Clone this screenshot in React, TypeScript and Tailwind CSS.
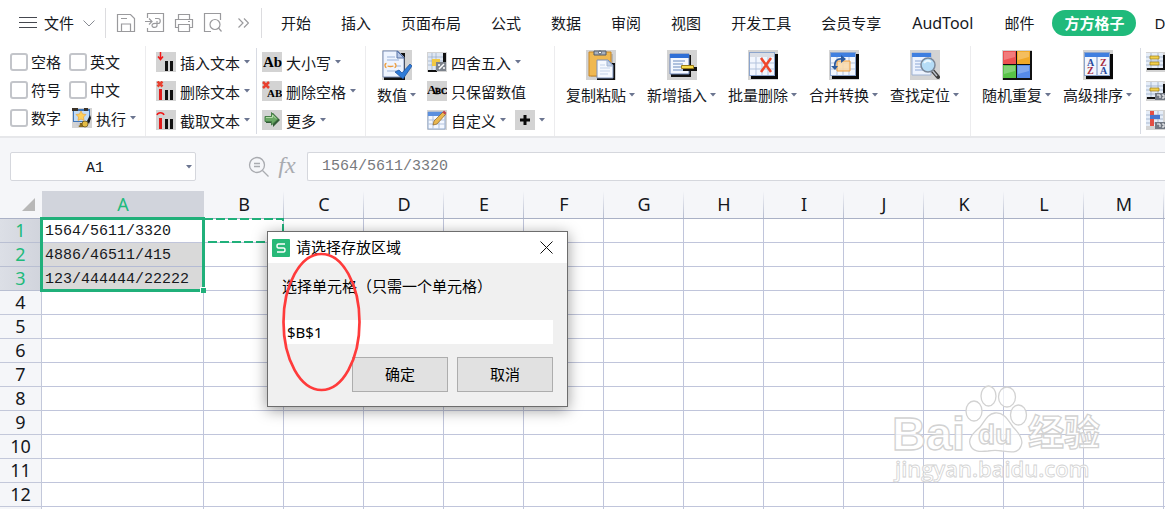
import type { ReactNode } from "react";

const TABS = ["开始", "插入", "页面布局", "公式", "数据", "审阅", "视图", "开发工具", "会员专享", "AudTool", "邮件", "方方格子", "D"];
const COLUMNS = ["A", "B", "C", "D", "E", "F", "G", "H", "I", "J", "K", "L", "M"];
const ROWS = ["1564/5611/3320", "4886/46511/415", "123/444444/22222", "", "", "", "", "", "", "", "", "", ""];

function Caret() {
  return (
    <svg className="shrink-0" width="6" height="4" viewBox="0 0 6 4" aria-hidden="true">
      <path d="M0 0h6L3 3.5z" fill="#6b7590" />
    </svg>
  );
}

function SmallIcon({ children }: { children?: ReactNode }) {
  return (
    <svg className="shrink-0" width="20" height="20" viewBox="0 0 20 20" aria-hidden="true">
      <path d="M0 0h20v20H0z" fill="#d3d3d3" />
      {children}
    </svg>
  );
}

function BigIcon({ children }: { children?: ReactNode }) {
  return (
    <svg className="shrink-0" width="30" height="30" viewBox="0 0 30 30" aria-hidden="true">
      <path d="M0 0h30v30H0z" fill="#d3d3d3" />
      {children}
    </svg>
  );
}

function Bars({ first = "#111" }: { first?: string }) {
  return (
    <>
      {first !== "#111" && <path d="M3 8h3v11H3z" fill={first} />}
      <path d="M9 9h3v10H9zM14 9h3v10h-3z" fill="#111" />
    </>
  );
}

// blue-headed sheet with a black drop shadow
function SheetArt({ grid = true, head = "#3f7fe0" }: { grid?: boolean; head?: string }) {
  return (
    <>
      <path d="M3 4h27v25H3z" fill="#080808" />
      <path d="M1 2h26v24H1z" fill="#8ba4cc" />
      <path d="M2 7h24v18H2z" fill="#f2f6fd" />
      <path d="M2 3h24v4H2z" fill={head} />
      {grid && <path d="M2 13h24M2 19h24M8 7v18M14 7v18M20 7v18" stroke="#b3c3dd" fill="none" />}
    </>
  );
}

const icons = {
  insertText: <SmallIcon><Bars /><path d="M4.500 0v7M2 4.500 4.500 7.500 7 4.500" stroke="#f01818" strokeWidth="1.500" fill="none" /></SmallIcon>,
  deleteText: <SmallIcon><path d="M1.500.5l5 5M6.500.5l-5 5" stroke="#e8402f" strokeWidth="2.500" /><Bars first="#e01b1b" /></SmallIcon>,
  cutText: <SmallIcon><path d="M1 5C2 2 7 2 8 5" stroke="#f01818" strokeWidth="1.500" fill="none" /><Bars first="#e01b1b" /></SmallIcon>,
  letterCase: <SmallIcon><text x="1" y="15" fontFamily="Liberation Serif" fontWeight="700" fontSize="15">Ab</text></SmallIcon>,
  deleteSpace: <SmallIcon><path d="M1 1l6 6M7 1 1 7" stroke="#e8402f" strokeWidth="2.500" /><text x="5" y="16" fontFamily="Liberation Serif" fontWeight="700" fontSize="11">AB</text></SmallIcon>,
  more: (
    <SmallIcon>
      <path d="M4 7h7V3l7 7-7 7v-4H4z" fill="#345c38" />
      <path d="M3 6.500h6.500v-4L16 9l-6.500 6v-3.500H3z" fill="#6aa865" stroke="#497f4a" />
      <path d="M4 7.500h6.500V5L14 8.500" stroke="#b9deae" fill="none" />
    </SmallIcon>
  ),
  run: (
    <SmallIcon>
      <path d="M1 1h17v13H1z" fill="#3f75b8" />
      <path d="M2 3h15v10H2z" fill="#c3dcf6" />
      <path d="M0 0h6v3H0zM12 0h4v3h-4z" fill="#3b3228" />
      <path d="m9 3 1.500 3 3.500.5-2.500 2.500.5 3.500-3-1.500-3 1.500.5-3.500L4 6.500 7.500 6z" fill="#ffd05a" stroke="#e8a53f" strokeWidth=".7" />
      <path d="m15 13 3-6 1 3-2 6z" fill="#1b1b1b" />
      <path d="M5 15h9l-2 4H7z" fill="#8a6c20" />
      <circle cx="13" cy="16" r="3" fill="#e5bd45" stroke="#5a4715" strokeWidth=".7" />
      <circle cx="6" cy="16" r="2" fill="#c9cdd5" />
    </SmallIcon>
  ),
  round: (
    <SmallIcon>
      <path d="M1 1h15v17H1z" fill="#dfe7f2" />
      <path d="M1 5h15M1 9h15M1 13h15M5 1v17M9 1v17" stroke="#8fa3c0" strokeWidth=".6" />
      <path d="M5 7h8v7H5z" fill="#f2c944" />
      <path d="M16 1h3v9h-3zM1 18h9v2H1z" fill="#111" />
      <path d="M9 10h10v9H9z" fill="#7d838c" />
      <path d="m12 17 5-5M11 13h2M16 16h2" stroke="#fff" strokeWidth="1.500" />
    </SmallIcon>
  ),
  abc: <SmallIcon><text x="0" y="13" fontFamily="Liberation Serif" fontWeight="700" fontSize="13">A</text><text x="8" y="13" fontFamily="Liberation Serif" fontWeight="700" fontSize="9" stroke="#000" strokeWidth=".4">BC</text></SmallIcon>,
  custom: (
    <SmallIcon>
      <path d="M1 2h17v17H1z" fill="#f4f8ff" stroke="#91a9cc" />
      <path d="M1 2h17v4H1z" fill="#5b8fdd" />
      <path d="M1 10h17M1 14h17M6 6v13M12 6v13" stroke="#b3c3dd" />
      <path d="m6 15 1-4L16 2l2.500 2.500L10 14z" fill="#eab851" stroke="#8b6327" strokeWidth=".7" />
      <path d="m15.500 2.500 1.500-2 2.500 2.500-1.500 1.500z" fill="#c3434a" />
    </SmallIcon>
  ),
  plus: <SmallIcon><path d="M10 5v10M5 10h10" stroke="#080808" strokeWidth="3" /></SmallIcon>,
  value: (
    <BigIcon>
      <path d="M2 3h21v27H2z" fill="#111" />
      <path d="M1 1h15l6 6v20H1z" fill="#eef4ff" stroke="#7d90b8" />
      <path d="M15 1v7h7z" fill="#b7c8e8" stroke="#5672a5" />
      <path d="M5 7h8M5 10h12M14 16h5M5 21h12" stroke="#9bb2d8" />
      <path d="M4.500 13.500q-1.500 0-1.500 2t1.500 2M12.500 13.500q1.500 0 1.500 2t-1.500 2M5.500 16q3 1 6 0" stroke="#ed9a35" strokeWidth="1.300" fill="none" />
      <path d="m13 22 4-2 3 3 8-9 2 2-9 13z" fill="#2e7bd8" stroke="#174a98" strokeWidth=".7" />
    </BigIcon>
  ),
  paste: (
    <BigIcon>
      <path d="M5 4h22v23H5z" fill="#0c0c0c" opacity=".15" />
      <path d="M3 2h22v24H3z" fill="#f0b851" stroke="#c98724" />
      <path d="M8 1h12v4H8z" fill="#aab2bf" stroke="#535b68" />
      <circle cx="14" cy="2.500" r="1.500" fill="#fff" stroke="#535b68" />
      <path d="M11 13h18v17H11z" fill="#111" />
      <path d="M11 10h11l5 5v13H11z" fill="#f6f9ff" stroke="#7d90b8" />
      <path d="M21 10v6h6z" fill="#c5d3e9" stroke="#a3b5d1" />
      <path d="M14 15h5M14 18h10M14 21h10M14 24h8" stroke="#c5d3e9" />
    </BigIcon>
  ),
  insert: (
    <BigIcon>
      <path d="M4 5h20v22H4z" fill="#111" />
      <path d="M3 4h19v20H3z" fill="#f4f8ff" stroke="#6a83b5" />
      <path d="M3 4h19v4H3z" fill="#2f6fd6" />
      <path d="M6 11h12M6 14h10M6 17h9M6 20h12" stroke="#6889bd" />
      <path d="M16 17h14v4H16z" fill="#111" />
      <path d="M14.500 15.500h12v3h-12z" fill="#f6dc4c" stroke="#9b7c18" />
    </BigIcon>
  ),
  remove: <BigIcon><SheetArt head="#d9dde5" /><path d="m13 8 10 14M23 8 13 22" stroke="#f0452b" strokeWidth="2.500" /></BigIcon>,
  merge: (
    <BigIcon>
      <SheetArt />
      <path d="M8 11h13v10H8z" fill="#fbd9a7" fillOpacity=".85" stroke="#ec9b3a" />
      <path d="M6 18C5 11 8 8 14 9" stroke="#2c5a9e" strokeWidth="1.800" fill="none" />
      <path d="m12 5 5 4-5 4zM2 16h7l-3 4z" fill="#2c5a9e" />
    </BigIcon>
  ),
  find: (
    <BigIcon>
      <path d="M2 3h19v22H2z" fill="#edf3fe" stroke="#9fb3d4" />
      <path d="M2 3h19v4H2z" fill="#3f7fe0" />
      <path d="M5 11h7M5 14h6M5 17h6M5 20h8" stroke="#8ca7d5" />
      <path d="m22 20 6 7" stroke="#3d3d3d" strokeWidth="4" strokeLinecap="round" />
      <path d="m22 20 5 6" stroke="#b9bfc8" strokeWidth="1.500" />
      <circle cx="18" cy="15" r="7" fill="#b5dcf6" stroke="#7a8798" strokeWidth="1.500" />
      <path d="M14 13q3-4 7-1" stroke="#ecf8ff" fill="none" strokeWidth="2" />
    </BigIcon>
  ),
  random: (
    <BigIcon>
      <path d="M1 1h29v29H1z" fill="#111" />
      <path d="M1 1h13v13H1z" fill="#ec5151" />
      <path d="M15 1h13v13H15z" fill="#f1a928" />
      <path d="M1 15h13v13H1z" fill="#59c348" />
      <path d="M15 15h13v13H15z" fill="#568be9" />
      <path d="M2 2h11v5L2 10zM16 2h11v5l-11 3zM2 16h11v5L2 24zM16 16h11v5l-11 3z" fill="#fff" opacity=".25" />
    </BigIcon>
  ),
  sort: (
    <BigIcon>
      <SheetArt grid={false} />
      <path d="M14 7v18" stroke="#6c8cc2" />
      <g fontFamily="Liberation Serif" fontWeight="700" fontSize="10">
        <text x="4" y="16" fill="#284b9f">A</text><text x="4" y="24" fill="#a52a42">Z</text>
        <text x="17" y="16" fill="#a52a42">Z</text><text x="17" y="24" fill="#284b9f">A</text>
      </g>
    </BigIcon>
  ),
};

function SheetMini({ kind }: { kind: number }) {
  return (
    <SmallIcon>
      {kind < 2 && <path d="M1 3h18v15H1z" fill="#111" />}
      <path d="M0 1h17v15H0z" fill="#e5edf8" />
      <path d="M0 5h17M0 9h17M0 13h17M5 1v15M12 1v15" stroke="#8fa3c0" strokeWidth=".7" />
      {kind === 0 && <path d="M4 4h9v3H4zM4 10h9v3H4z" fill="#f2cf4b" stroke="#9b7c18" strokeWidth=".7" />}
      {kind === 1 && <path d="M4 7h9v3H4z" fill="#f2cf4b" stroke="#9b7c18" strokeWidth=".7" />}
      {kind === 2 && <><path d="M4 1h4v15H4z" fill="#e34f45" /><path d="M4 5h10v4H4z" fill="#4575cf" /></>}
      {kind > 0 && <><path d="M9 12h10v7H9z" fill="#727984" /><path d="M11 14h3v3M16 14h2v3h-2" stroke="#fff" fill="none" /></>}
    </SmallIcon>
  );
}

function Divider({ dark }: { dark?: boolean }) {
  return <div className={dark ? "my-0.5 w-px shrink-0 bg-[#d8dbe3]" : "w-px shrink-0 bg-[#ececee]"} />;
}

function Tool({ icon, label, caret = true }: { icon: ReactNode; label: string; caret?: boolean }) {
  return (
    <button type="button" className="flex h-5 items-center gap-1 whitespace-nowrap">
      {icon}
      <span className="pt-0.5">{label}</span>
      {caret && <Caret />}
    </button>
  );
}

function BigTool({ icon, label }: { icon: ReactNode; label: string }) {
  return (
    <button type="button" className="flex shrink-0 flex-col items-center gap-[5px] self-start pt-1 whitespace-nowrap">
      {icon}
      <span className="flex h-5 items-center gap-[3px]">{label}<Caret /></span>
    </button>
  );
}

function Check({ label }: { label: string }) {
  return (
    <label className="flex items-center gap-[3px]">
      <input type="checkbox" className="size-[18px] appearance-none rounded-[3px] border-2 border-[#c3c5ca] bg-white" />
      {label}
    </label>
  );
}

function TabBar() {
  return (
    <header className="flex h-[46px] shrink-0 items-center overflow-hidden bg-white whitespace-nowrap">
      <button type="button" className="flex shrink-0 items-center gap-[7px] pl-[19px]">
        <svg width="18" height="12" viewBox="0 0 18 12" fill="none" stroke="#45484f" aria-hidden="true"><path d="M0 .5h18M0 5.500h18M0 10.500h18" /></svg>
        文件
        <svg className="ml-0.5" width="12" height="7" viewBox="0 0 12 7" fill="none" stroke="#888b92" aria-hidden="true"><path d="m.5.5 5.500 5.500L11.500.5" /></svg>
      </button>
      <div className="ml-2.5 h-[30px] w-px shrink-0 bg-[#dcdcdf]" />
      <div className="flex shrink-0 items-center gap-[9px] pr-2 pl-2.5 text-[#9a9a9d]">
        <button type="button" aria-label="保存">
          <svg width="20" height="20" viewBox="0 0 20 20" fill="none" stroke="currentColor" strokeWidth="1.200"><path d="M1.500 1.500h13l4 4v13h-17zM5.500 18v-7h9v7M5 5.500h6" /></svg>
        </button>
        <button type="button" aria-label="输出">
          <svg width="20" height="20" viewBox="0 0 20 20" fill="none" stroke="currentColor" strokeWidth="1.200"><path d="M2.500 5V.500h16v18h-16V15M0 8.500h7M4 5.500l3 3-3 3M10 5.500h3c3 0 3 5 0 5h-1.500M12 8v4.500c0 2.500-5 2.500-5 0s3-2 5-2" /></svg>
        </button>
        <button type="button" aria-label="打印">
          <svg width="20" height="20" viewBox="0 0 20 20" fill="none" stroke="currentColor" strokeWidth="1.200"><path d="M4.500 6V1.500h11V6M4.500 14.500h-3v-8h17v8h-3M4.500 11.500h11v7h-11zM14 8.500h2" /></svg>
        </button>
        <button type="button" aria-label="打印预览">
          <svg width="20" height="20" viewBox="0 0 20 20" fill="none" stroke="currentColor" strokeWidth="1.200"><path d="M8 18.500H1.500v-18h16V7" /><circle cx="12" cy="11.500" r="5" /><path d="m15.500 15 3 3.500" /></svg>
        </button>
        <button type="button" aria-label="更多命令" className="ml-1.5">
          <svg width="11" height="10" viewBox="0 0 11 10" fill="none" stroke="currentColor" strokeWidth="1.200"><path d="m.5.5 4.500 4.500L.5 9.500M6 .5 10.500 5 6 9.500" /></svg>
        </button>
      </div>
      <div className="ml-1 h-[30px] w-px shrink-0 bg-[#dcdcdf]" />
      <nav className="ml-1 flex items-center">
        {TABS.map((tab) => (
          <button
            key={tab}
            type="button"
            className={
              tab === "方方格子"
                ? "mx-[3px] h-[26px] rounded-full bg-[#20ba7b] px-3 font-bold text-white"
                : tab === "AudTool"
                  ? "px-4 text-base leading-5"
                  : "px-[15px]"
            }
          >
            {tab}
          </button>
        ))}
      </nav>
    </header>
  );
}

function Ribbon() {
  return (
    <section className="flex h-[92px] shrink-0 overflow-hidden border-b-2 border-[#e6e7ea] bg-white whitespace-nowrap">
      <div className="grid shrink-0 grid-cols-[59px_67px] grid-rows-3 items-center gap-y-0 pt-0.5 pb-1 pl-2.5">
        <Check label="空格" />
        <Check label="英文" />
        <Check label="符号" />
        <Check label="中文" />
        <Check label="数字" />
        <div className="pl-[3px]"><Tool icon={icons.run} label="执行" /></div>
      </div>
      <div className="w-[9px] shrink-0" />
      <Divider />
      <div className="flex w-[110px] shrink-0 flex-col gap-[9px] pt-1.5 pl-2.5">
        <Tool icon={icons.insertText} label="插入文本" />
        <Tool icon={icons.deleteText} label="删除文本" />
        <Tool icon={icons.cutText} label="截取文本" />
      </div>
      <Divider dark />
      <div className="flex w-[108px] shrink-0 flex-col gap-[9px] pt-1.5 pl-[5px]">
        <Tool icon={icons.letterCase} label="大小写" />
        <Tool icon={icons.deleteSpace} label="删除空格" />
        <Tool icon={icons.more} label="更多" />
      </div>
      <Divider />
      <div className="flex w-[188px] shrink-0 gap-[11px] pl-[11px]">
        <BigTool icon={icons.value} label="数值" />
        <div className="flex flex-col gap-[9px] pt-1.5">
          <Tool icon={icons.round} label="四舍五入" />
          <Tool icon={icons.abc} label="只保留数值" caret={false} />
          <div className="flex gap-[9px]">
            <Tool icon={icons.custom} label="自定义" />
            <button type="button" aria-label="添加" className="flex h-5 items-center gap-1">{icons.plus}<Caret /></button>
          </div>
        </div>
      </div>
      <Divider />
      <div className="flex shrink-0 gap-3 px-[11px]">
        <BigTool icon={icons.paste} label="复制粘贴" />
        <BigTool icon={icons.insert} label="新增插入" />
        <BigTool icon={icons.remove} label="批量删除" />
        <BigTool icon={icons.merge} label="合并转换" />
        <BigTool icon={icons.find} label="查找定位" />
      </div>
      <Divider />
      <div className="flex shrink-0 gap-3 pr-2 pl-[11px]">
        <BigTool icon={icons.random} label="随机重复" />
        <BigTool icon={icons.sort} label="高级排序" />
      </div>
      <Divider dark />
      <div className="flex shrink-0 flex-col gap-[9px] pt-1.5 pl-[5px]">
        <SheetMini kind={0} />
        <SheetMini kind={1} />
        <SheetMini kind={2} />
      </div>
    </section>
  );
}

function FormulaBar() {
  return (
    <section className="flex h-[53px] shrink-0 items-start pt-3.5 pl-2.5">
      <label className="relative flex w-[186px] shrink-0 items-center">
        <input
          aria-label="名称框"
          defaultValue="A1"
          className="h-[29px] w-full rounded-xs border border-[#d5d7dd] bg-white pt-[3px] pr-4 text-center font-['Liberation_Mono','Noto_Sans_CJK_SC',monospace] text-[15px]"
        />
        <span className="absolute right-1 flex"><Caret /></span>
      </label>
      <div className="ml-[52px] flex h-[29px] shrink-0 items-center gap-2 text-[#a9abb0]">
        <svg width="22" height="22" viewBox="0 0 22 22" fill="none" stroke="currentColor" strokeWidth="1.300" aria-hidden="true">
          <circle cx="9" cy="9" r="7.500" /><path d="m14.500 14.500 6 6M6 7.500h6M6 10.500h6" />
        </svg>
        <button type="button" className="w-[18px] pb-1 font-['Liberation_Serif',serif] text-2xl leading-6 italic">fx</button>
      </div>
      <input
        aria-label="编辑栏"
        defaultValue="1564/5611/3320"
        className="ml-[11px] h-[29px] min-w-0 flex-1 rounded-l-xs border border-r-0 border-[#d5d7dd] bg-white pl-3.5 font-['Liberation_Mono','Noto_Sans_CJK_SC',monospace] text-[15px] text-[#77797d]"
      />
    </section>
  );
}

function Sheet() {
  return (
    <section className="relative min-h-0 flex-1 overflow-hidden">
      <table className="w-full table-fixed border-separate border-spacing-0 bg-white">
        <colgroup>
          <col className="w-[42px]" />
          <col className="w-[162px]" />
          {COLUMNS.slice(1).map((c) => <col key={c} className="w-20" />)}
          <col />
        </colgroup>
        <thead>
          <tr className="h-7 bg-[#f5f6f9] text-lg leading-6">
            <th className="border-b border-[#aab1c6] p-0">
              <svg className="ml-[22px]" width="13" height="13" viewBox="0 0 13 13" aria-hidden="true"><path d="M13 0v13H0z" fill="#b8b8b8" /></svg>
            </th>
            {COLUMNS.map((c) => (
              <th
                key={c}
                className={
                  c === "A"
                    ? "border-b border-[#aab1c6] bg-[#d1d4dc] p-0 pb-0.5 font-normal text-[#20ba7b]"
                    : "border-b border-[#aab1c6] bg-[linear-gradient(to_bottom,#f5f6f9,#b6bccf)] bg-[length:1px_100%] bg-right bg-no-repeat p-0 pb-0.5 font-normal"
                }
              >
                {c}
              </th>
            ))}
            <th className="border-b border-[#aab1c6] p-0" />
          </tr>
        </thead>
        <tbody>
          {ROWS.map((value, i) => (
            <tr key={i} className="h-6">
              <th
                className={
                  i < 3
                    ? "border-r border-b border-[#b9bfd2] bg-[linear-gradient(to_right,#dcdfe6,#d1d4dc)] p-0 pb-0.5 text-lg leading-5 font-normal text-[#20ba7b]"
                    : "border-r border-b border-[#c3c8da] bg-[#f5f6f9] p-0 pb-0.5 text-lg leading-5 font-normal"
                }
              >
                {i < 12 ? i + 1 : ""}
              </th>
              <td
                className={
                  i === 1 || i === 2
                    ? "border-r border-b border-[#b4bbd4] bg-[#d9d9d9] p-0 pt-[3px] pl-[3px] font-['Liberation_Mono',monospace] leading-5"
                    : "border-r border-b border-[#c0c5db] p-0 pt-[3px] pl-[3px] font-['Liberation_Mono',monospace] leading-5"
                }
              >
                {value}
              </td>
              {COLUMNS.slice(1).map((c) => <td key={c} className="border-r border-b border-[#c0c5db] p-0" />)}
              <td className="border-b border-[#c0c5db] p-0" />
            </tr>
          ))}
        </tbody>
      </table>
      {/* selected range A1:A3 with its fill handle */}
      <div className="pointer-events-none absolute top-[26px] left-10 h-[75px] w-[165px] border-3 border-[#20b07a]">
        <div className="absolute -right-1 -bottom-1 size-[6px] border-t border-l border-white bg-[#20b07a]" />
      </div>
      {/* marching border round B1 */}
      <svg className="absolute top-[27px] left-[203px]" width="82" height="26" viewBox="0 0 82 26" fill="none" stroke="#20b07a" strokeWidth="2" strokeDasharray="9 3" aria-hidden="true">
        <path d="M1 1h79v23H1z" />
      </svg>
      <Watermark />
    </section>
  );
}

function Watermark() {
  return (
    <svg className="pointer-events-none absolute top-[190px] left-[890px]" width="220" height="102" viewBox="0 0 220 102" aria-hidden="true">
      <g fill="#fff" fillOpacity=".7" stroke="#d2d2d2" strokeWidth="1.300">
        <ellipse cx="84" cy="30" rx="8" ry="10" />
        <ellipse cx="98.500" cy="15" rx="7.500" ry="10" />
        <ellipse cx="117" cy="16" rx="8.500" ry="10" />
        <ellipse cx="128.500" cy="34" rx="8" ry="10" />
        <path d="M105 32c9-1 13 7 18 14 6 6 11 13 8 19-3 8-12 6-19 5-5-1-9-1-14 0-8 1-16 1-18-7-2-7 5-12 10-17 5-6 7-13 15-14z" />
        <g fontFamily="Liberation Sans, sans-serif" fontWeight="700">
          <text x="2" y="69" fontSize="47">Bai</text>
          <text x="88" y="63" fontSize="28">du</text>
          <text x="138" y="65" fontFamily="Noto Sans CJK SC, sans-serif" fontSize="36">经验</text>
        </g>
        <text x="5" y="96" fontFamily="Open Sans, sans-serif" fontWeight="600" fontSize="22" strokeWidth=".8">jingyan.baidu.com</text>
      </g>
    </svg>
  );
}

function RangeDialog() {
  return (
    <div role="dialog" aria-labelledby="range-title" className="absolute top-[231px] left-[267px] w-[301px] border border-[#6d6d6d] bg-[#f0f0f0] text-black shadow-[0_3px_14px_rgba(0,0,0,0.4)]">
      <div className="flex h-[31px] items-center bg-white pr-3.5 pl-1">
        <svg width="18" height="18" viewBox="0 0 18 18" aria-hidden="true">
          <rect width="18" height="18" rx="1" fill="#27b978" />
          <path d="M13 5H6.500Q5 5 5 7t1.500 2h5Q13 9 13 11t-1.500 2H5" fill="none" stroke="#fff" strokeWidth="1.400" />
        </svg>
        <h2 id="range-title" className="ml-1.5 flex-1 pb-0.5">请选择存放区域</h2>
        <button type="button" aria-label="关闭">
          <svg width="13" height="13" viewBox="0 0 13 13" stroke="#111" aria-hidden="true"><path d="m.5.5 12 12M12.500.5l-12 12" /></svg>
        </button>
      </div>
      <div className="px-3.5 pt-[11px] pb-3.5">
        <label htmlFor="target" className="block h-[46px] leading-6 whitespace-nowrap">选择单元格（只需一个单元格）</label>
        <input id="target" defaultValue="$B$1" className="ml-0.5 block h-6 w-[269px] bg-white px-[3px]" />
        <div className="mt-[13px] flex justify-end gap-[9px]">
          <button type="button" className="h-[35px] w-24 border border-[#adadad] bg-[#e1e1e1] pb-0.5">确定</button>
          <button type="button" className="h-[35px] w-24 border border-[#adadad] bg-[#e1e1e1] pb-0.5">取消</button>
        </div>
      </div>
      <svg className="pointer-events-none absolute top-5 left-3.5" width="80" height="140" viewBox="0 0 80 140" aria-hidden="true">
        <ellipse cx="39.500" cy="70" rx="38" ry="68" fill="none" stroke="#ff3b3b" strokeWidth="2.700" />
      </svg>
    </div>
  );
}

export default function App() {
  return (
    <main className="relative flex h-screen flex-col overflow-hidden bg-[#f5f6f9] font-['Noto_Sans','Noto_Sans_CJK_SC',sans-serif] text-[15px] leading-5 text-[#16181d]">
      <TabBar />
      <Ribbon />
      <FormulaBar />
      <Sheet />
      <RangeDialog />
    </main>
  );
}
